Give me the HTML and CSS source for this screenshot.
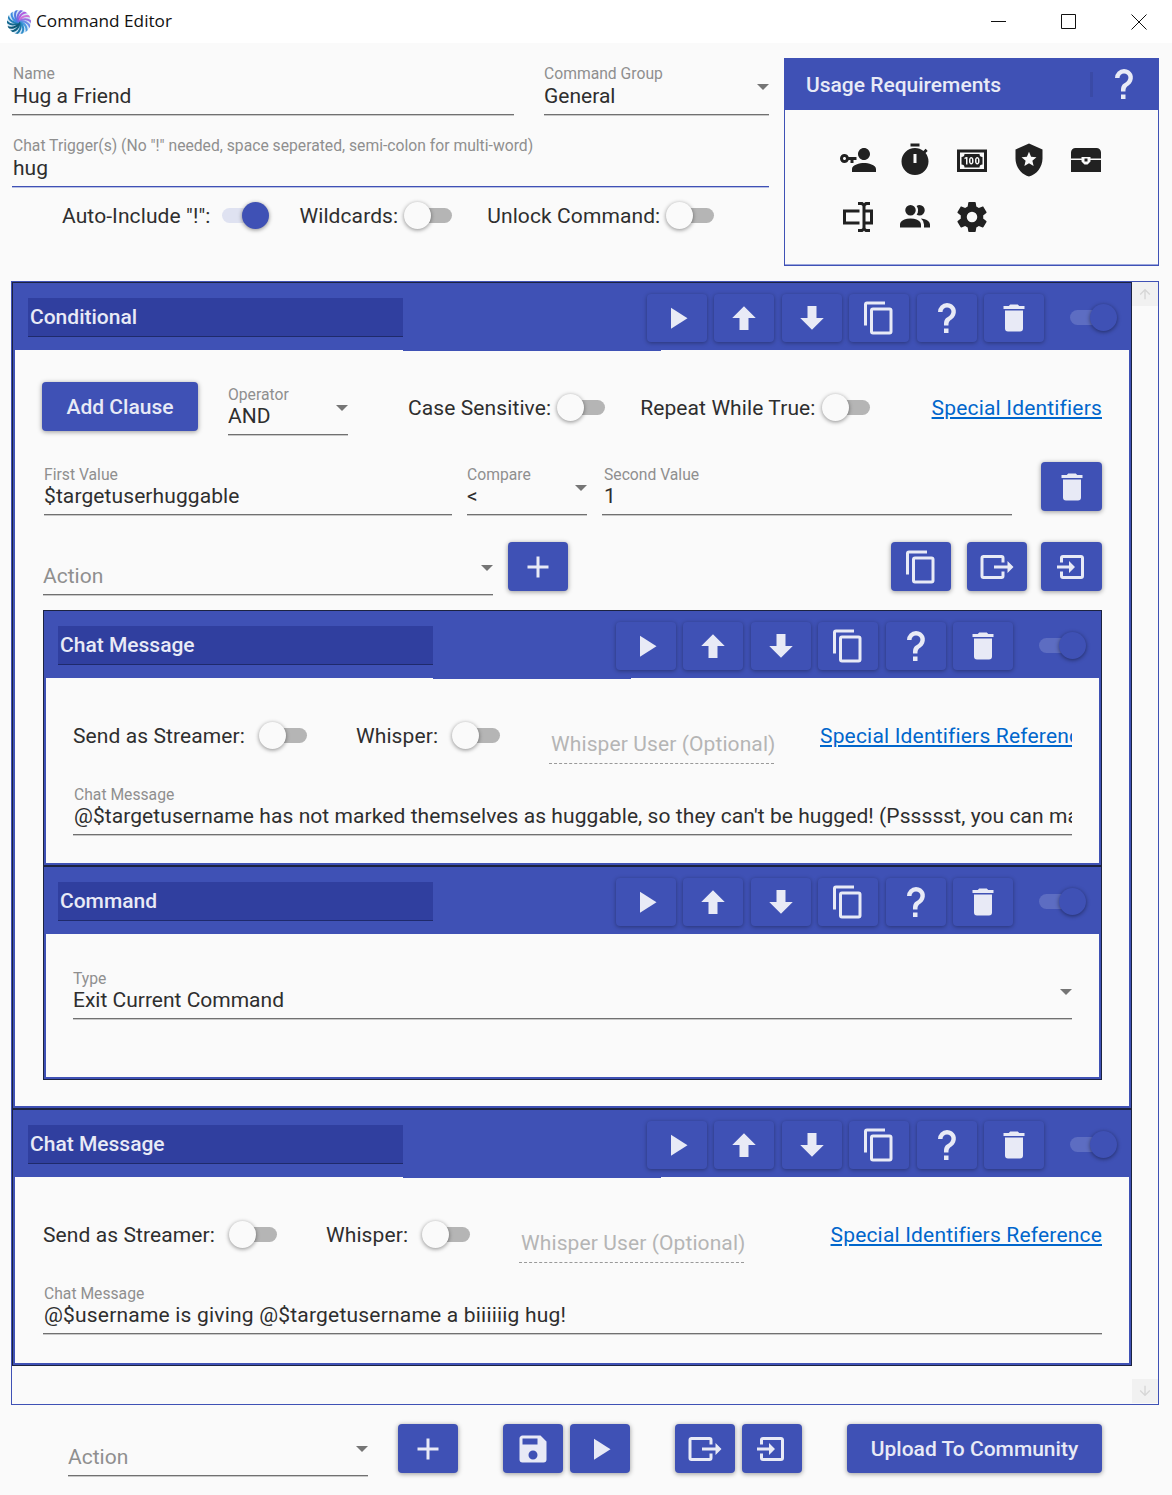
FILE: index.html
```html
<!DOCTYPE html>
<html lang="en">
<head>
  <meta charset="UTF-8">
  <title>Command Editor</title>
  <link rel="stylesheet" href="styles.css">
</head>
<body>
  <svg class="sprite" xmlns="http://www.w3.org/2000/svg">
    <symbol id="i-play" viewBox="0 0 24 24"><path d="M8,5.14V19.14L19,12.14L8,5.14Z"/></symbol>
    <symbol id="i-up" viewBox="0 0 24 24"><path d="M15,20H9V12H4.16L12,4.16L19.84,12H15V20Z"/></symbol>
    <symbol id="i-down" viewBox="0 0 24 24"><path d="M9,4H15V12H19.84L12,19.84L4.16,12H9V4Z"/></symbol>
    <symbol id="i-copy" viewBox="0 0 24 24"><path d="M19,21H8V7H19M19,5H8A2,2 0 0,0 6,7V21A2,2 0 0,0 8,23H19A2,2 0 0,0 21,21V7A2,2 0 0,0 19,5M16,1H4A2,2 0 0,0 2,3V17H4V3H16V1Z"/></symbol>
    <symbol id="i-help" viewBox="0 0 24 24"><path d="M10,19H13V22H10V19M12,2C17.35,2.22 19.68,7.62 16.5,11.67C15.67,12.67 14.33,13.33 13.67,14.17C13,15 13,16 13,17H10C10,15.33 10,13.92 10.67,12.92C11.33,11.92 12.67,11.33 13.5,10.67C15.92,8.43 15.32,5.26 12,5A3,3 0 0,0 9,8H6A6,6 0 0,1 12,2Z"/></symbol>
    <symbol id="i-trash" viewBox="0 0 24 24"><path d="M19,4H15.5L14.5,3H9.5L8.5,4H5V6H19M6,19A2,2 0 0,0 8,21H16A2,2 0 0,0 18,19V7H6V19Z"/></symbol>
    <symbol id="i-plus" viewBox="0 0 24 24"><path d="M19,13H13V19H11V13H5V11H11V5H13V11H19V13Z"/></symbol>
    <symbol id="i-export" viewBox="0 0 24 24"><path d="M23,12L19,8V11H10V13H19V16M1,18V6C1,4.89 1.9,4 3,4H15A2,2 0 0,1 17,6V9H15V6H3V18H15V15H17V18A2,2 0 0,1 15,20H3A2,2 0 0,1 1,18Z"/></symbol>
    <symbol id="i-import" viewBox="0 0 24 24"><path d="M14,12L10,8V11H2V13H10V16M20,18V6C20,4.89 19.1,4 18,4H6A2,2 0 0,0 4,6V9H6V6H18V18H6V15H4V18A2,2 0 0,0 6,20H18A2,2 0 0,0 20,18Z"/></symbol>
    <symbol id="i-save" viewBox="0 0 24 24"><path d="M15,9H5V5H15M12,19A3,3 0 0,1 9,16A3,3 0 0,1 12,13A3,3 0 0,1 15,16A3,3 0 0,1 12,19M17,3H5C3.89,3 3,3.9 3,5V19A2,2 0 0,0 5,21H19A2,2 0 0,0 21,19V7L17,3Z"/></symbol>
    <symbol id="i-key" viewBox="0 0 24 24"><path d="M11 10V12H9V14H7V12H5.8C5.4 13.2 4.3 14 3 14C1.3 14 0 12.7 0 11S1.3 8 3 8C4.3 8 5.4 8.8 5.8 10H11M3 10C2.4 10 2 10.4 2 11S2.4 12 3 12 4 11.6 4 11 3.6 10 3 10M16 14C18.7 14 24 15.3 24 18V20H8V18C8 15.3 13.3 14 16 14M16 12C13.8 12 12 10.2 12 8S13.8 4 16 4 20 5.8 20 8 18.2 12 16 12Z"/></symbol>
    <symbol id="i-timer" viewBox="0 0 24 24"><path fill-rule="evenodd" d="M15 1H9v2h6V1zM11 14h2V8h-2v6zM19.03 7.39l1.42-1.42c-.43-.51-.9-.99-1.41-1.41l-1.42 1.42C16.07 4.74 14.12 4 12 4c-4.97 0-9 4.03-9 9s4.02 9 9 9 9-4.03 9-9c0-2.12-.74-4.07-1.97-5.61z"/></symbol>
    <symbol id="i-cash" viewBox="0 0 24 24"><path d="M2,5H22V20H2V5M20,18V7H4V18H20M17,8A2,2 0 0,0 19,10V15A2,2 0 0,0 17,17H7A2,2 0 0,0 5,15V10A2,2 0 0,0 7,8H17M17,13V12C17,10.9 16.33,10 15.5,10C14.67,10 14,10.9 14,12V13C14,14.1 14.67,15 15.5,15C16.33,15 17,14.1 17,13M15.5,11A0.5,0.5 0 0,1 16,11.5V13.5A0.5,0.5 0 0,1 15.5,14A0.5,0.5 0 0,1 15,13.5V11.5A0.5,0.5 0 0,1 15.5,11M13,13V12C13,10.9 12.33,10 11.5,10C10.67,10 10,10.9 10,12V13C10,14.1 10.67,15 11.5,15C12.33,15 13,14.1 13,13M11.5,11A0.5,0.5 0 0,1 12,11.5V13.5A0.5,0.5 0 0,1 11.5,14A0.5,0.5 0 0,1 11,13.5V11.5A0.5,0.5 0 0,1 11.5,11M8,15H9V10H8L7,10.5V11.5L8,11V15Z"/></symbol>
    <symbol id="i-shield" viewBox="0 0 24 24"><path d="M12,1L3,5V11C3,16.55 6.84,21.74 12,23C17.16,21.74 21,16.55 21,11V5L12,1M15.08,16L12,14.15L8.93,16L9.74,12.5L7.03,10.16L10.61,9.85L12,6.55L13.39,9.84L16.97,10.15L14.26,12.5L15.08,16Z"/></symbol>
    <symbol id="i-chest" viewBox="0 0 24 24"><path d="M5,4H19A3,3 0 0,1 22,7V11H15V10H9V11H2V7A3,3 0 0,1 5,4M11,11H13V13H11V11M2,12H9V13L11,15H13L15,13V12H22V20H2V12Z"/></symbol>
    <symbol id="i-textbox" viewBox="0 0 24 24"><path d="M17,7H22V17H17V19A1,1 0 0,0 18,20H20V22H17.5C16.95,22 16,21.55 16,21C16,21.55 15.05,22 14.5,22H12V20H14A1,1 0 0,0 15,19V5A1,1 0 0,0 14,4H12V2H14.5C15.05,2 16,2.45 16,3C16,2.45 16.95,2 17.5,2H20V4H18A1,1 0 0,0 17,5V7M2,7H13V9H4V15H13V17H2V7M20,15V9H17V15H20Z"/></symbol>
    <symbol id="i-users" viewBox="0 0 24 24"><path d="M16 17V19H2V17S2 13 9 13 16 17 16 17M12.5 7.5A3.5 3.5 0 1 0 9 11A3.5 3.5 0 0 0 12.5 7.5M15.94 13A5.32 5.32 0 0 1 18 17V19H22V17S22 13.37 15.94 13M15 4A3.39 3.39 0 0 0 13.07 4.59A5 5 0 0 1 13.07 10.41A3.39 3.39 0 0 0 15 11A3.5 3.5 0 0 0 15 4Z"/></symbol>
    <symbol id="i-cog" viewBox="0 0 24 24"><path d="M12,15.5A3.5,3.5 0 0,1 8.5,12A3.5,3.5 0 0,1 12,8.5A3.5,3.5 0 0,1 15.5,12A3.5,3.5 0 0,1 12,15.5M19.43,12.97C19.47,12.65 19.5,12.33 19.5,12C19.5,11.67 19.47,11.34 19.43,11L21.54,9.37C21.73,9.22 21.78,8.95 21.66,8.73L19.66,5.27C19.54,5.05 19.27,4.96 19.05,5.05L16.56,6.05C16.04,5.66 15.5,5.32 14.87,5.07L14.5,2.42C14.46,2.18 14.25,2 14,2H10C9.75,2 9.54,2.18 9.5,2.42L9.13,5.07C8.5,5.32 7.96,5.66 7.44,6.05L4.95,5.05C4.73,4.96 4.46,5.05 4.34,5.27L2.34,8.73C2.21,8.95 2.27,9.22 2.46,9.37L4.57,11C4.53,11.34 4.5,11.67 4.5,12C4.5,12.33 4.53,12.65 4.57,12.97L2.46,14.63C2.27,14.78 2.21,15.05 2.34,15.27L4.34,18.73C4.46,18.95 4.73,19.03 4.95,18.94L7.44,17.94C7.96,18.34 8.5,18.68 9.13,18.93L9.5,21.58C9.54,21.82 9.75,22 10,22H14C14.25,22 14.46,21.82 14.5,21.58L14.87,18.93C15.5,18.67 16.04,18.34 16.56,17.94L19.05,18.95C19.27,19.03 19.54,18.95 19.66,18.73L21.66,15.27C21.78,15.05 21.73,14.78 21.54,14.63L19.43,12.97Z"/></symbol>
  </svg>

  <header class="titlebar">
    <svg class="logo" viewBox="0 0 24 24" fill="none" stroke-width="2">
      <circle cx="12" cy="12" r="12" fill="#8fc0ea" opacity="0.4"/>
      <path transform="rotate(0 12 12)" stroke="#b05ce0" d="M12 12C11 7 14.5 2 22 2"/>
      <path transform="rotate(26 12 12)" stroke="#d070d8" d="M12 12C11 7 14.5 2 22 2"/>
      <path transform="rotate(52 12 12)" stroke="#9a70e0" d="M12 12C11 7 14.5 2 22 2"/>
      <path transform="rotate(78 12 12)" stroke="#6a8ae8" d="M12 12C11 7 14.5 2 22 2"/>
      <path transform="rotate(104 12 12)" stroke="#4a9ade" d="M12 12C11 7 14.5 2 22 2"/>
      <path transform="rotate(130 12 12)" stroke="#2f8cc8" d="M12 12C11 7 14.5 2 22 2"/>
      <path transform="rotate(156 12 12)" stroke="#1d78a8" d="M12 12C11 7 14.5 2 22 2"/>
      <path transform="rotate(182 12 12)" stroke="#116080" d="M12 12C11 7 14.5 2 22 2"/>
      <path transform="rotate(208 12 12)" stroke="#0d5674" d="M12 12C11 7 14.5 2 22 2"/>
      <path transform="rotate(234 12 12)" stroke="#14688e" d="M12 12C11 7 14.5 2 22 2"/>
      <path transform="rotate(260 12 12)" stroke="#2480b8" d="M12 12C11 7 14.5 2 22 2"/>
      <path transform="rotate(286 12 12)" stroke="#3f8ce0" d="M12 12C11 7 14.5 2 22 2"/>
      <path transform="rotate(312 12 12)" stroke="#4f7be0" d="M12 12C11 7 14.5 2 22 2"/>
      <path transform="rotate(338 12 12)" stroke="#7a6ae0" d="M12 12C11 7 14.5 2 22 2"/>
    </svg>
    <span class="title-text">Command Editor</span>
    <div class="win-controls">
      <svg class="win-btn" viewBox="0 0 16 16"><path d="M0 7.5H15"/></svg>
      <svg class="win-btn" viewBox="0 0 16 16"><path d="M.5 .5H14.5V14.5H.5Z"/></svg>
      <svg class="win-btn" viewBox="0 0 16 16"><path d="M.5 .5L15.5 15.5M15.5 .5L.5 15.5"/></svg>
    </div>
  </header>

  <section class="top">
    <div class="top-left">
      <div class="top-row">
        <div class="field name-field"><label>Name</label><div class="value">Hug a Friend</div></div>
        <div class="field select group-field"><label>Command Group</label><div class="value">General</div></div>
      </div>
      <div class="field focused trigger-field"><label>Chat Trigger(s) (No "!" needed, space seperated, semi-colon for multi-word)</label><div class="value">hug</div></div>
      <div class="top-switches">
        <div class="labeled-switch"><span>Auto-Include "!":</span><span class="switch on"></span></div>
        <div class="labeled-switch"><span>Wildcards:</span><span class="switch"></span></div>
        <div class="labeled-switch"><span>Unlock Command:</span><span class="switch"></span></div>
      </div>
    </div>
    <aside class="usage">
      <div class="usage-head">
        <span class="usage-title">Usage Requirements</span>
        <span class="usage-divider"></span>
        <svg class="ic"><use href="#i-help"/></svg>
      </div>
      <div class="usage-icons">
        <svg class="ic"><use href="#i-key"/></svg>
        <svg class="ic"><use href="#i-timer"/></svg>
        <svg class="ic"><use href="#i-cash"/></svg>
        <svg class="ic"><use href="#i-shield"/></svg>
        <svg class="ic"><use href="#i-chest"/></svg>
        <svg class="ic"><use href="#i-textbox"/></svg>
        <svg class="ic"><use href="#i-users"/></svg>
        <svg class="ic"><use href="#i-cog"/></svg>
      </div>
    </aside>
  </section>

  <section class="scroller">
    <div class="cards">

      <div class="card">
        <div class="card-inner">
          <div class="card-head spill-wide">
            <div class="card-title">Conditional</div>
            <div class="card-tools">
              <button class="tool"><svg class="ic"><use href="#i-play"/></svg></button>
              <button class="tool"><svg class="ic"><use href="#i-up"/></svg></button>
              <button class="tool"><svg class="ic"><use href="#i-down"/></svg></button>
              <button class="tool"><svg class="ic"><use href="#i-copy"/></svg></button>
              <button class="tool"><svg class="ic"><use href="#i-help"/></svg></button>
              <button class="tool"><svg class="ic"><use href="#i-trash"/></svg></button>
            </div>
            <span class="switch head-switch"></span>
          </div>
          <div class="card-body cond-body">
            <div class="cond-row clause-row">
              <button class="btn add-clause">Add Clause</button>
              <div class="field select operator-field"><label>Operator</label><div class="value">AND</div></div>
              <div class="labeled-switch case-switch"><span>Case Sensitive:</span><span class="switch"></span></div>
              <div class="labeled-switch repeat-switch"><span>Repeat While True:</span><span class="switch"></span></div>
              <a class="link push-right" href="#">Special Identifiers</a>
            </div>
            <div class="cond-row value-row">
              <div class="field first-value"><label>First Value</label><div class="value">$targetuserhuggable</div></div>
              <div class="field select compare-field"><label>Compare</label><div class="value">&lt;</div></div>
              <div class="field second-value"><label>Second Value</label><div class="value">1</div></div>
              <button class="btn icon-btn wide-btn push-right"><svg class="ic"><use href="#i-trash"/></svg></button>
            </div>
            <div class="cond-row action-row">
              <div class="field select empty action-field"><div class="value">Action</div></div>
              <button class="btn icon-btn add-action"><svg class="ic"><use href="#i-plus"/></svg></button>
              <button class="btn icon-btn push-right"><svg class="ic"><use href="#i-copy"/></svg></button>
              <button class="btn icon-btn export-btn"><svg class="ic"><use href="#i-export"/></svg></button>
              <button class="btn icon-btn wide-btn import-btn"><svg class="ic"><use href="#i-import"/></svg></button>
            </div>

            <div class="card nested">
              <div class="card-inner">
                <div class="card-head spill-narrow">
                  <div class="card-title">Chat Message</div>
                  <div class="card-tools">
                    <button class="tool"><svg class="ic"><use href="#i-play"/></svg></button>
                    <button class="tool"><svg class="ic"><use href="#i-up"/></svg></button>
                    <button class="tool"><svg class="ic"><use href="#i-down"/></svg></button>
                    <button class="tool"><svg class="ic"><use href="#i-copy"/></svg></button>
                    <button class="tool"><svg class="ic"><use href="#i-help"/></svg></button>
                    <button class="tool"><svg class="ic"><use href="#i-trash"/></svg></button>
                  </div>
                  <span class="switch head-switch"></span>
                </div>
                <div class="card-body msg-body">
                  <div class="msg-row">
                    <div class="labeled-switch msg-switch"><span>Send as Streamer:</span><span class="switch"></span></div>
                    <div class="labeled-switch msg-switch whisper-switch"><span>Whisper:</span><span class="switch"></span></div>
                    <div class="whisper-user">Whisper User (Optional)</div>
                    <a class="link clipped-link" href="#">Special Identifiers Reference</a>
                  </div>
                  <div class="field msg-field"><label>Chat Message</label><div class="value">@$targetusername has not marked themselves as huggable, so they can't be hugged! (Pssssst, you can mark yourself as huggable with !huggable)</div></div>
                </div>
              </div>
            </div>

            <div class="card nested command-card">
              <div class="card-inner">
                <div class="card-head">
                  <div class="card-title">Command</div>
                  <div class="card-tools">
                    <button class="tool"><svg class="ic"><use href="#i-play"/></svg></button>
                    <button class="tool"><svg class="ic"><use href="#i-up"/></svg></button>
                    <button class="tool"><svg class="ic"><use href="#i-down"/></svg></button>
                    <button class="tool"><svg class="ic"><use href="#i-copy"/></svg></button>
                    <button class="tool"><svg class="ic"><use href="#i-help"/></svg></button>
                    <button class="tool"><svg class="ic"><use href="#i-trash"/></svg></button>
                  </div>
                  <span class="switch head-switch"></span>
                </div>
                <div class="card-body command-body">
                  <div class="field select"><label>Type</label><div class="value">Exit Current Command</div></div>
                </div>
              </div>
            </div>
          </div>
        </div>
      </div>

      <div class="card">
        <div class="card-inner">
          <div class="card-head spill-wide">
            <div class="card-title">Chat Message</div>
            <div class="card-tools">
              <button class="tool"><svg class="ic"><use href="#i-play"/></svg></button>
              <button class="tool"><svg class="ic"><use href="#i-up"/></svg></button>
              <button class="tool"><svg class="ic"><use href="#i-down"/></svg></button>
              <button class="tool"><svg class="ic"><use href="#i-copy"/></svg></button>
              <button class="tool"><svg class="ic"><use href="#i-help"/></svg></button>
              <button class="tool"><svg class="ic"><use href="#i-trash"/></svg></button>
            </div>
            <span class="switch head-switch"></span>
          </div>
          <div class="card-body msg-body">
            <div class="msg-row">
              <div class="labeled-switch msg-switch"><span>Send as Streamer:</span><span class="switch"></span></div>
              <div class="labeled-switch msg-switch whisper-switch"><span>Whisper:</span><span class="switch"></span></div>
              <div class="whisper-user">Whisper User (Optional)</div>
              <a class="link push-right" href="#">Special Identifiers Reference</a>
            </div>
            <div class="field msg-field loose"><label>Chat Message</label><div class="value">@$username is giving @$targetusername a biiiiiig hug!</div></div>
          </div>
        </div>
      </div>
    </div>

    <div class="scrollbar">
      <div class="scroll-arrow"><svg viewBox="0 0 24 24"><path d="M13,20H11V8L5.5,13.5L4.08,12.08L12,4.16L19.92,12.08L18.5,13.5L13,8V20Z"/></svg></div>
      <div class="scroll-arrow"><svg viewBox="0 0 24 24"><path d="M11,4H13V16L18.5,10.5L19.92,11.92L12,19.84L4.08,11.92L5.5,10.5L11,16V4Z"/></svg></div>
    </div>
  </section>

  <footer class="bottom">
    <div class="field select empty bottom-action"><div class="value">Action</div></div>
    <button class="btn icon-btn bottom-add"><svg class="ic"><use href="#i-plus"/></svg></button>
    <button class="btn icon-btn group-start"><svg class="ic"><use href="#i-save"/></svg></button>
    <button class="btn icon-btn group-next"><svg class="ic"><use href="#i-play"/></svg></button>
    <button class="btn icon-btn group-start"><svg class="ic"><use href="#i-export"/></svg></button>
    <button class="btn icon-btn group-next"><svg class="ic"><use href="#i-import"/></svg></button>
    <button class="btn upload group-start">Upload To Community</button>
  </footer>
</body>
</html>
```

FILE: styles.css
```css
* { box-sizing: border-box; }
html, body { height: 100%; }
body {
  margin: 0;
  width: 1172px;
  height: 1495px;
  overflow: hidden;
  background: #fafafa;
  color: #2e2e2e;
  font-family: Roboto, "Liberation Sans", sans-serif;
  font-size: 21px;
}
.sprite { display: none; }
.ic {
  display: block;
  width: 36px;
  height: 36px;
  fill: currentColor;
}

/* window title bar */
.titlebar {
  display: flex;
  align-items: center;
  height: 43px;
  padding-left: 7px;
  background: #fff;
}
.logo { width: 24px; height: 24px; border-radius: 50%; }
.title-text {
  margin: -2px 0 0 5px;
  font-family: "Open Sans", sans-serif;
  font-size: 17.2px;
  color: #111;
}
.win-controls {
  display: flex;
  gap: 54px;
  margin-left: auto;
  padding-right: 25px;
}
.win-btn {
  width: 16px;
  height: 16px;
  fill: none;
  stroke: #111;
  stroke-width: 1;
}

/* inputs */
.field {
  position: relative;
  height: 48px;
  border-bottom: 1px solid #707070;
  box-shadow: 0 1px 0 #c8c8c8;
  min-width: 0;
}
.field label {
  display: block;
  font-size: 15.7px;
  line-height: 16px;
  color: #8f8f8f;
  white-space: nowrap;
}
.field .value {
  font-size: 21px;
  line-height: 26px;
  white-space: nowrap;
  overflow: hidden;
}
.field.focused { border-bottom-color: #3f51b5; box-shadow: 0 1px 0 #b9c0e4; }
.field.empty { padding-top: 16px; }
.field.empty .value { color: #8f8f8f; }
.select::after {
  content: "";
  position: absolute;
  top: 18px;
  right: 0;
  border-left: 6px solid transparent;
  border-right: 6px solid transparent;
  border-top: 6px solid #757575;
}

/* switches */
.labeled-switch {
  display: flex;
  align-items: center;
  gap: 6px;
  white-space: nowrap;
}
.labeled-switch span:first-child { letter-spacing: 0.1px; }
.msg-switch { gap: 14px; }
.switch {
  position: relative;
  display: block;
  flex: none;
  width: 48px;
  height: 28px;
}
.switch::before {
  content: "";
  position: absolute;
  top: 6px;
  left: 8px;
  width: 40px;
  height: 15px;
  border-radius: 8px;
  background: #b5b5b5;
}
.switch::after {
  content: "";
  position: absolute;
  top: 0;
  left: 0;
  width: 27px;
  height: 27px;
  border-radius: 50%;
  background: #fafafa;
  box-shadow: 0 1px 4px rgba(0, 0, 0, 0.45);
}
.switch.on { margin: 0 -6px 0 6px; }
.switch.on::before { left: 0; background: #dfe2f1; }
.switch.on::after { left: 20px; background: #3f51b5; }
.head-switch { margin: 0 0 0 26px; }
.head-switch::before { left: 0; width: 40px; background: #5d6dc2; }
.head-switch::after { left: 20px; background: #3f51b5; }

/* top form */
.top {
  display: flex;
  gap: 15px;
  height: 238px;
  padding: 15px 13px 0 12px;
}
.top-left { width: 757px; padding-top: 8px; }
.top-left .field { height: 49px; }
.top-left .value { padding-top: 1px; }
.top-row { display: flex; gap: 30px; }
.name-field { width: 502px; }
.group-field { width: 225px; }
.name-field label, .trigger-field label { margin-left: 1px; }
.name-field .value, .trigger-field .value { padding-left: 1px; }
.trigger-field { margin-top: 23px; }
.top-switches {
  display: flex;
  gap: 35px;
  margin-top: 15px;
  padding-left: 50px;
}
.usage {
  width: 375px;
  height: 208px;
  border: 1px solid #3f51b5;
  box-shadow: inset 0 -1px 0 #9aa5dc;
}
.usage-head {
  display: flex;
  align-items: center;
  height: 52px;
  margin: -1px -1px 0;
  padding: 0 17px 0 22px;
  background: #3f51b5;
  color: #e8eaf6;
}
.usage-title { padding-top: 2px; font-weight: 500; }
.usage-divider {
  width: 3px;
  height: 25px;
  margin-left: auto;
  margin-right: 13px;
  background: #3a4aa6;
}
.usage-icons {
  display: grid;
  grid-template-columns: repeat(5, 36px);
  grid-auto-rows: 36px;
  gap: 21px;
  padding: 32px 0 0 55px;
  color: #212121;
}

/* scrolling list of cards */
.scroller {
  display: flex;
  width: 1148px;
  height: 1124px;
  margin-left: 11px;
  border: 1px solid #3f51b5;
}
.cards { width: 1120px; flex: none; }
.card { border: 1px solid #1c2340; background: #fafafa; }
.card-inner { border: 2px solid #3f51b5; }
.card-head {
  position: relative;
  display: flex;
  align-items: center;
  height: 65px;
  padding: 0 11px 0 13px;
  background: #3f51b5;
  color: #e8eaf6;
}
.nested .card-head { padding: 0 12px; }
.spill-wide::after,
.spill-narrow::after {
  content: "";
  position: absolute;
  top: 100%;
  left: 388px;
  width: 258px;
  height: 1px;
  background: #3f51b5;
}
.spill-narrow::after { left: 387px; width: 198px; }
.card-title {
  width: 375px;
  height: 39px;
  padding-left: 2px;
  border-bottom: 1px solid #1f2a6b;
  background: #303f9f;
  font-weight: 500;
  line-height: 38px;
}
.card-tools {
  display: flex;
  gap: 7.5px;
  margin-left: auto;
}
.tool, .btn {
  display: flex;
  align-items: center;
  justify-content: center;
  flex: none;
  padding: 0;
  border: 0;
  border-radius: 4px;
  background: #3f51b5;
  color: #e8eaf6;
  font: 500 21px Roboto, sans-serif;
}
.tool {
  width: 60px;
  height: 48px;
  box-shadow: 0 1px 4px rgba(0, 0, 0, 0.35);
}
.btn {
  height: 49px;
  box-shadow: 0 1px 5px rgba(0, 0, 0, 0.4);
}
.icon-btn { width: 60px; }
.wide-btn { width: 61px; }
.link {
  color: #0066cc;
  white-space: nowrap;
  letter-spacing: 0.18px;
}
.push-right { margin-left: auto; }

/* conditional */
.cond-body { padding: 32px 27px 26px 28px; }
.cond-row {
  display: flex;
  align-items: flex-start;
  height: 53px;
}
.clause-row { align-items: center; }
.clause-row .labeled-switch, .clause-row .link { margin-bottom: 2px; }
.add-clause { align-self: flex-start; width: 156px; margin-left: -1px; padding-top: 1px; }
.operator-field { align-self: flex-end; width: 120px; margin-left: 30px; }
.case-switch { margin-left: 60px; }
.repeat-switch { margin-left: 35px; }
.value-row { margin-top: 27px; }
.value-row .field { align-self: flex-end; }
.first-value { width: 408px; margin-left: 1px; }
.first-value .value { letter-spacing: 0.1px; }
.compare-field { width: 120px; margin-left: 15px; }
.second-value { width: 410px; margin-left: 15px; }
.second-value label, .second-value .value { padding-left: 2px; }
.action-row { margin-top: 27px; }
.action-field { align-self: flex-end; width: 450px; }
.add-action { margin-left: 15px; }
.export-btn { margin-left: 16px; }
.import-btn { margin-left: 14px; }
.nested { width: 1059px; margin-top: 15px; }
.command-card { margin-top: 0; }
.command-body { padding: 37px 27px 58px; }

/* chat message */
.card-body { background: #fafafa; }
.msg-body { padding: 30px 27px 29px 28px; }
.nested .msg-body { padding: 30px 27px 28px; }
.msg-row {
  display: flex;
  align-items: center;
  height: 56px;
}
.whisper-switch { margin-left: 49px; }
.whisper-user {
  align-self: flex-end;
  width: 225px;
  height: 33px;
  margin-left: 49px;
  padding-left: 2px;
  border-bottom: 1px dashed #999;
  color: #b5b5b5;
  line-height: 26px;
  white-space: nowrap;
  letter-spacing: 0.1px;
}
.clipped-link {
  width: 252px;
  margin-left: auto;
  overflow: hidden;
}
.msg-field { margin-top: 23px; }
.msg-field label { padding-left: 1px; }
.msg-field .value { padding-left: 1px; letter-spacing: 0.07px; }
.msg-field.loose .value { letter-spacing: 0.2px; }

/* scrollbar */
.scrollbar {
  display: flex;
  flex: 1;
  flex-direction: column;
  justify-content: space-between;
  padding-bottom: 1px;
}
.scroll-arrow {
  display: flex;
  align-items: center;
  justify-content: center;
  height: 24px;
  background: #f1f1f1;
}
.scroll-arrow svg { width: 16px; height: 16px; fill: #d6d6d6; }

/* bottom bar */
.bottom {
  display: flex;
  align-items: flex-start;
  padding: 19px 0 0 68px;
}
.bottom-action { width: 300px; margin-top: 4px; }
.bottom-add { margin-left: 30px; }
.group-start { margin-left: 45px; }
.group-next { margin-left: 7px; }
.upload { width: 255px; }
```
